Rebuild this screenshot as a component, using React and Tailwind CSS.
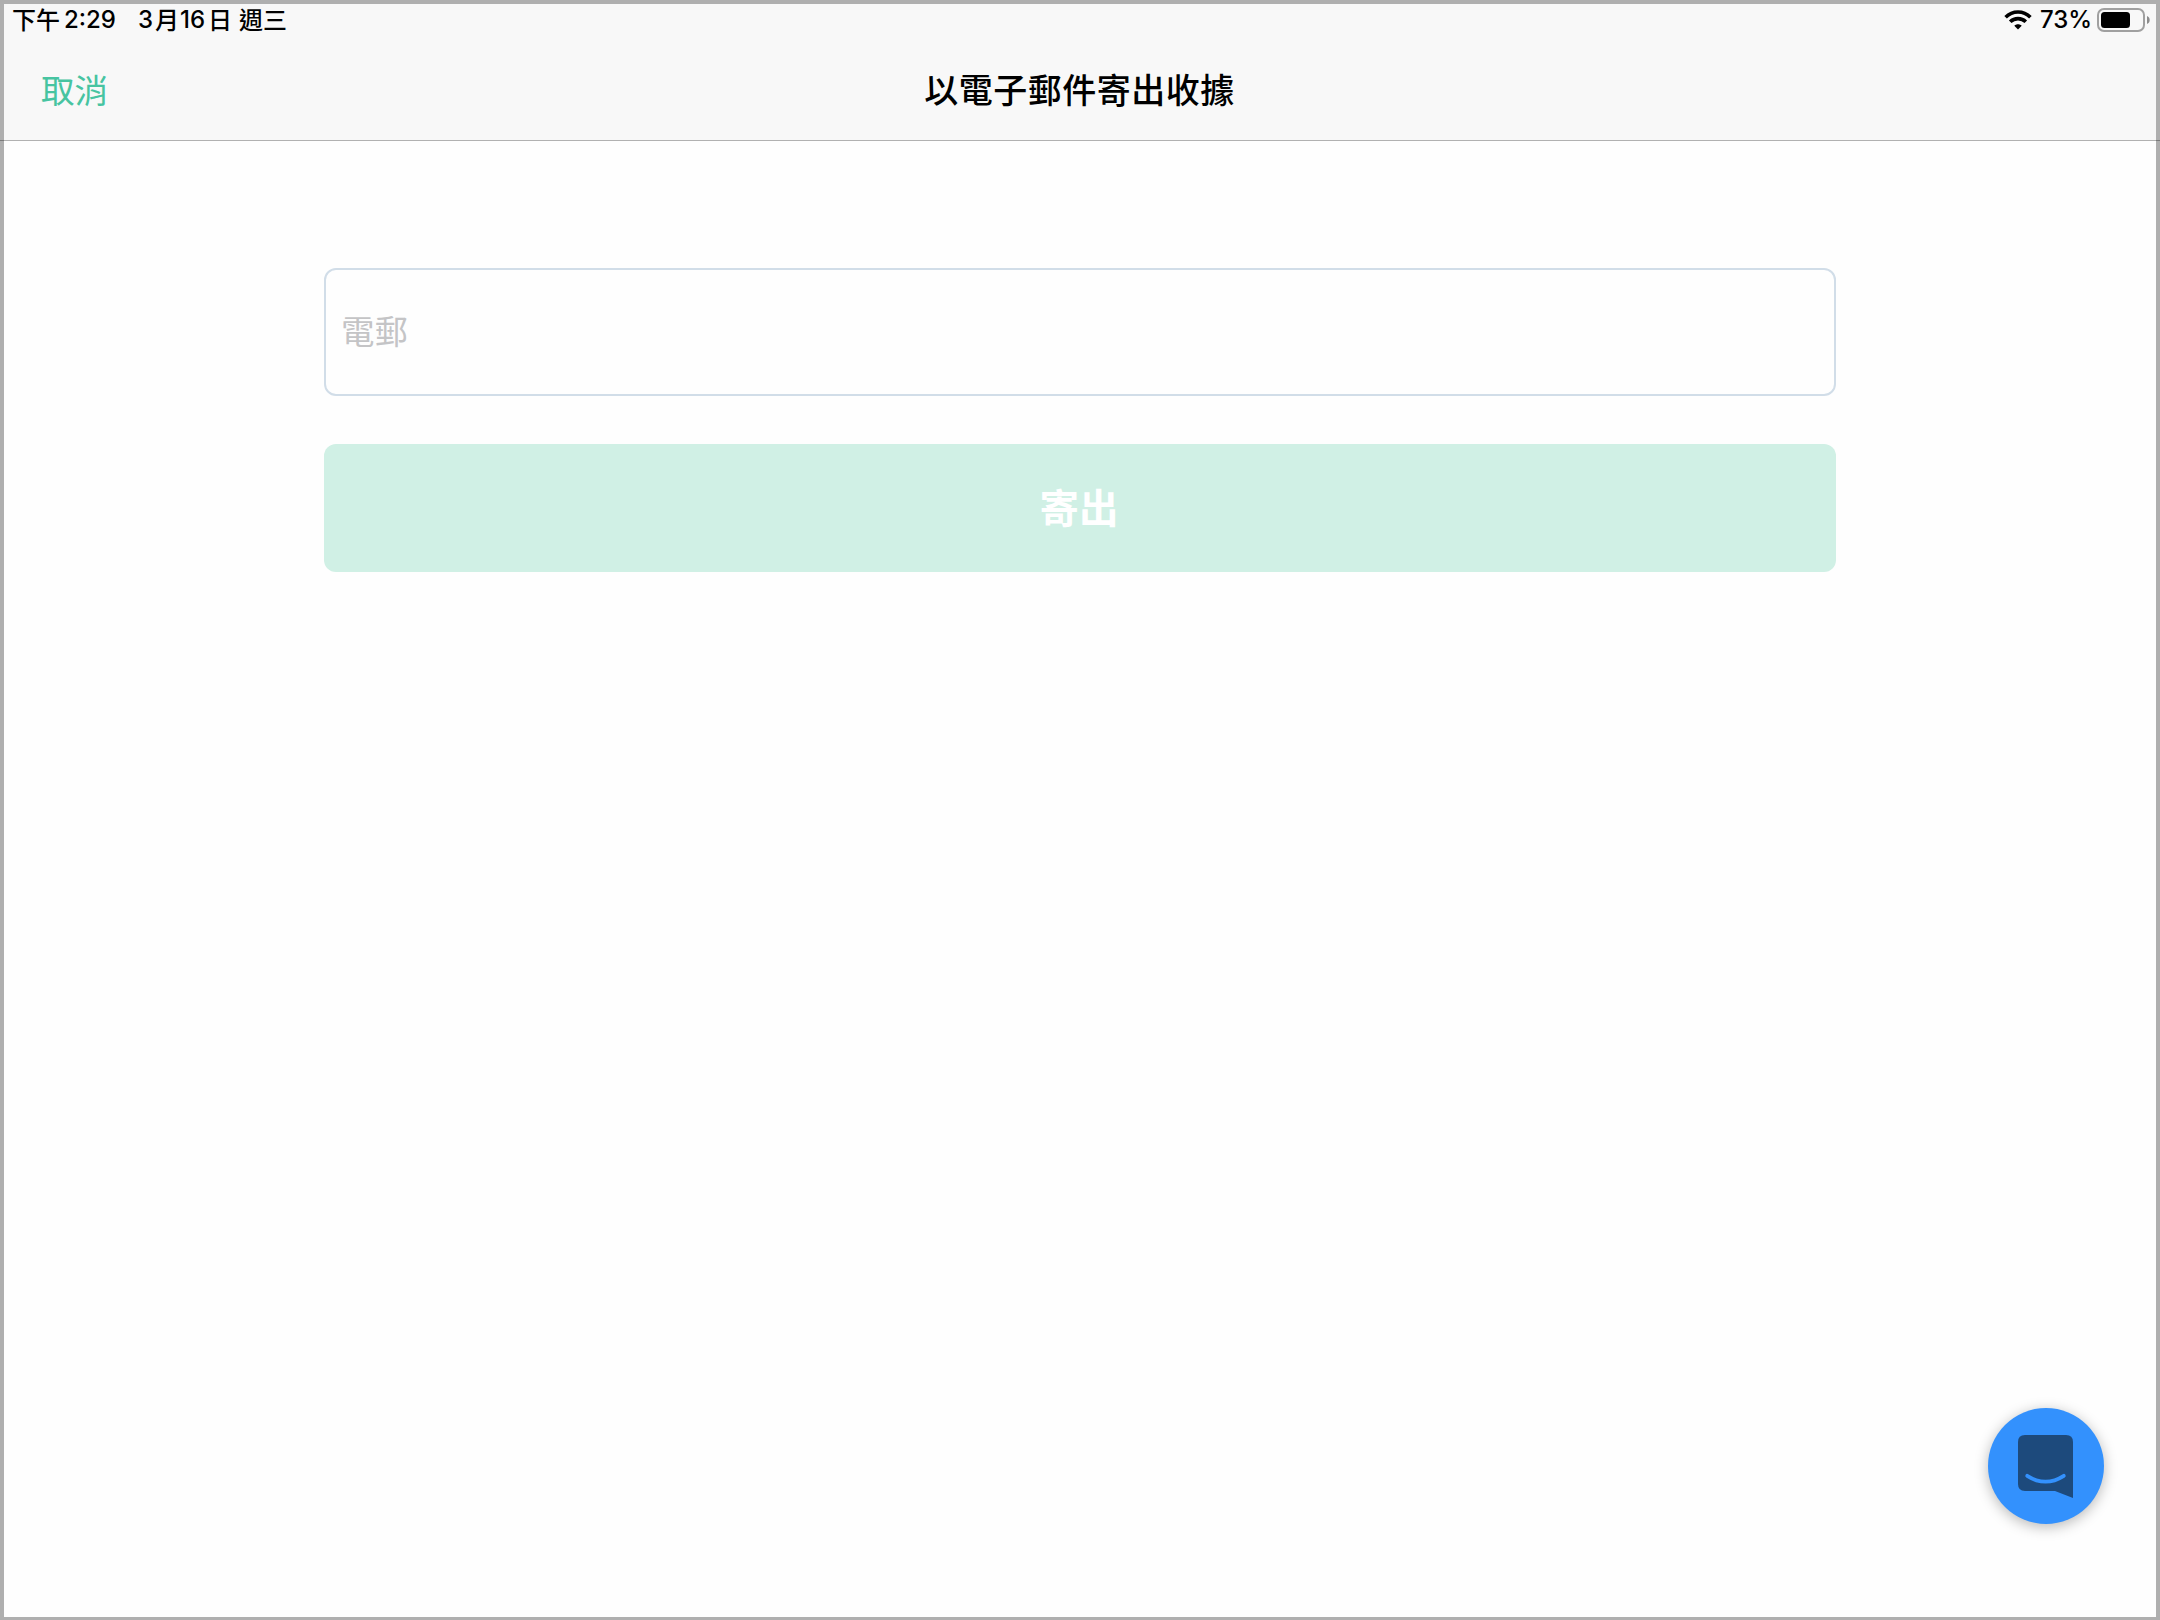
import { useState } from 'react'

const FONT = "font-['Inter','Noto_Sans_CJK_TC',sans-serif]"

function WifiIcon() {
  return (
    <svg className="w-7 h-5" viewBox="0 0 28 20" fill="none" stroke="#000" strokeWidth="3.6">
      <path d="M1.6 7.2C8.5 .2 19.5 .2 26.4 7.2" />
      <path d="M6.2 11.8C10.5 7.5 17.5 7.5 21.8 11.8" />
      <path d="M10.3 15.8C12.3 13.8 15.7 13.8 17.7 15.8L14 19.6Z" fill="#000" stroke="none" />
    </svg>
  )
}

function BatteryIcon() {
  return (
    <svg className="w-[54px] h-6" viewBox="0 0 54 24">
      <rect x="1" y="1" width="46" height="22" rx="6" fill="none" stroke="#a0a0a0" strokeWidth="2" />
      <rect x="4" y="4" width="29" height="16" rx="3.5" fill="#000" />
      <path d="M50 8c3.6 1.2 3.6 6.8 0 8z" fill="#8c8c8c" />
    </svg>
  )
}

function StatusBar() {
  return (
    <div className="h-8 pl-2 pr-[5px] flex justify-between text-[24px] leading-8 font-medium text-black whitespace-nowrap">
      <div className="flex">
        <span className="w-[52px] pt-px">下午</span>
        <span className="w-[74px]">2:29</span>
        <span className="w-[17px]">3</span>
        <span className="w-[25px] pt-px">月</span>
        <span className="w-[28px]">16</span>
        <span className="w-[31px] pt-px">日</span>
        <span className="pt-px">週三</span>
      </div>
      <div className="flex items-center">
        <WifiIcon />
        <span className="ml-2 w-[57px]">73%</span>
        <BatteryIcon />
      </div>
    </div>
  )
}

function ChatButton() {
  return (
    <button className="fixed right-14 bottom-24 size-[116px] rounded-full bg-[#3391fd] shadow-[0_3px_14px_rgba(0,0,0,0.28)] flex items-center justify-center">
      <svg className="w-[55px] h-[63px] mr-px" viewBox="0 0 55 63">
        <path d="M7 0H48Q55 0 55 7V63L37 56H7Q0 56 0 49V7Q0 0 7 0Z" fill="#1d4a7c" />
        <path d="M9.2 40.8Q27.5 52.5 45.8 40.8" fill="none" stroke="#3391fd" strokeWidth="3.8" strokeLinecap="round" />
      </svg>
    </button>
  )
}

function App() {
  const [email, setEmail] = useState('')

  return (
    <div className={`h-[1620px] border-4 border-b-[3px] border-[#afafaf] bg-[#fefefe] ${FONT}`}>
      <header className="-mx-1 h-[137px] border-b border-black/30">
        <div className="mx-1 h-full bg-[#f8f8f8]">
          <StatusBar />
          <div className="grid grid-cols-3 items-center px-9 pt-[30px] text-[34px] leading-[50px]">
            <button className="justify-self-start pl-px text-[33.5px] font-normal text-[#47c4a1]">取消</button>
            <h1 className="justify-self-center pr-px font-medium tracking-[0.5px] text-black whitespace-nowrap">以電子郵件寄出收據</h1>
          </div>
        </div>
      </header>

      <main className="mx-auto w-[1512px] pt-[127px] flex flex-col gap-12">
        <input
          type="email"
          value={email}
          onChange={e => setEmail(e.target.value)}
          placeholder="電郵"
          className="h-32 rounded-xl border-2 border-[#d1dde8] bg-transparent px-[15px] text-[33.5px] font-normal placeholder:text-[#c4c4c6] outline-none"
        />
        <button className="h-32 pt-[3px] pr-0.5 rounded-xl bg-[#d0f0e5] text-[39.5px] font-bold text-white" disabled={!email}>
          寄出
        </button>
      </main>

      <ChatButton />
    </div>
  )
}

export default App
